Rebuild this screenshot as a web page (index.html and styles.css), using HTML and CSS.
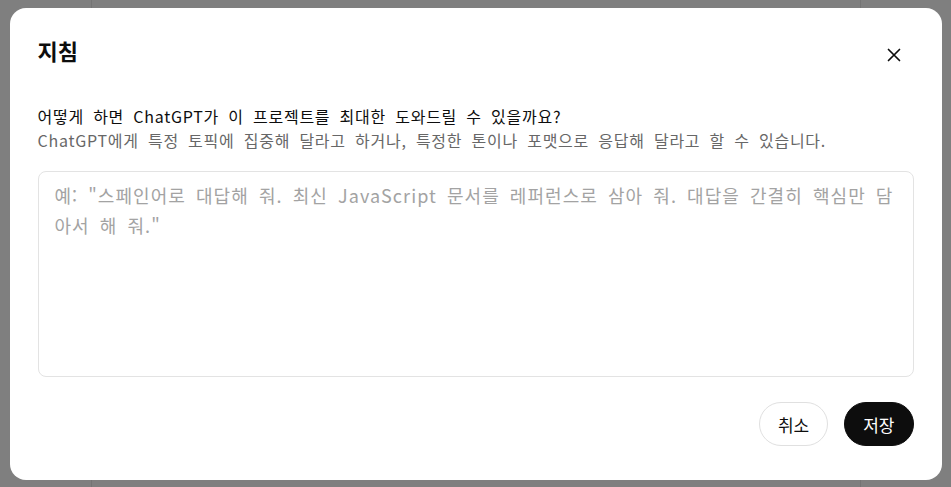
FILE: index.html
```html
<!DOCTYPE html>
<html lang="ko">
<head>
<meta charset="utf-8">
<title>지침</title>
<link rel="stylesheet" href="styles.css">
</head>
<body>
<div class="page">
  <aside class="sidebar"></aside>
  <main class="main"></main>
  <div class="rest"></div>
</div>
<div class="overlay">
  <div class="modal" role="dialog" aria-labelledby="dlg-title">
    <div class="modal-header">
      <h2 id="dlg-title" class="modal-title">지침</h2>
      <button class="close-btn" aria-label="닫기">
        <svg width="14" height="14" viewBox="0 0 14 14" fill="none" stroke="#0d0d0d" stroke-width="1.7" stroke-linecap="round">
          <path d="M1.5 1.5 L12.5 12.5 M12.5 1.5 L1.5 12.5"/>
        </svg>
      </button>
    </div>
    <div class="desc">
      <p class="desc-q">어떻게 하면 ChatGPT가 이 프로젝트를 최대한 도와드릴 수 있을까요?</p>
      <p class="desc-sub">ChatGPT에게 특정 토픽에 집중해 달라고 하거나, 특정한 톤이나 포맷으로 응답해 달라고 할 수 있습니다.</p>
    </div>
    <textarea class="instructions" placeholder="예: &quot;스페인어로 대답해 줘. 최신 JavaScript 문서를 레퍼런스로 삼아 줘. 대답을 간결히 핵심만 담아서 해 줘.&quot;"></textarea>
    <div class="modal-footer">
      <button class="btn btn-cancel">취소</button>
      <button class="btn btn-save">저장</button>
    </div>
  </div>
</div>
</body>
</html>
```
FILE: styles.css
```css
* { box-sizing: border-box; }
html, body {
  margin: 0;
  padding: 0;
  height: 100%;
}
body {
  font-family: "Noto Sans CJK KR", "Noto Sans", sans-serif;
  background: #ffffff;
  overflow: hidden;
}
.page {
  display: flex;
  height: 100%;
}
.sidebar {
  width: 92px;
  border-right: 1px solid #e8e8e8;
  flex: none;
}
.main {
  width: 769px;
  border-right: 1px solid #e8e8e8;
  flex: none;
}
.rest { flex: 1; }

.overlay {
  position: fixed;
  inset: 0;
  background: rgba(0, 0, 0, 0.5);
  display: flex;
  align-items: flex-start;
  justify-content: center;
  padding-top: 8px;
}
.modal {
  width: 932px;
  height: 472px;
  background: #ffffff;
  border-radius: 16px;
  padding: 28px 28px 34px 28px;
  display: flex;
  flex-direction: column;
}
.modal-header {
  display: flex;
  justify-content: space-between;
  align-items: flex-start;
}
.modal-title {
  margin: 0;
  font-size: 22px;
  line-height: 28px;
  font-weight: 700;
  color: #0d0d0d;
}
.close-btn {
  width: 28px;
  height: 28px;
  margin-top: 5px;
  margin-right: 6px;
  border: 0;
  background: transparent;
  padding: 0;
  display: flex;
  align-items: center;
  justify-content: center;
  cursor: pointer;
}
.desc {
  margin-top: 35px;
}
.desc p {
  margin: 0;
  font-size: 16px;
  line-height: 24px;
  letter-spacing: 0.75px;
  word-spacing: 4px;
}
.desc-q { color: #0d0d0d; }
.desc-sub { color: #676767; }

.instructions {
  margin-top: 19px;
  height: 206px;
  flex: none;
  width: 100%;
  resize: none;
  border: 1px solid #e3e3e3;
  border-radius: 8px;
  padding: 8px 16px;
  font-family: "Noto Sans CJK KR", "Noto Sans", sans-serif;
  font-size: 18px;
  line-height: 30px;
  letter-spacing: 1.05px;
  word-spacing: 4px;
  color: #0d0d0d;
  outline: none;
}
.instructions::placeholder { color: #a3a3a3; }

.modal-footer {
  margin-top: 25px;
  display: flex;
  justify-content: flex-end;
  gap: 16px;
}
.btn {
  height: 44px;
  padding: 0 18px;
  border-radius: 22px;
  font-family: "Noto Sans CJK KR", "Noto Sans", sans-serif;
  font-size: 17px;
  cursor: pointer;
}
.btn-cancel {
  background: #ffffff;
  border: 1px solid #e0e0e0;
  color: #0d0d0d;
}
.btn-save {
  background: #0d0d0d;
  border: 1px solid #0d0d0d;
  color: #ffffff;
}
```
